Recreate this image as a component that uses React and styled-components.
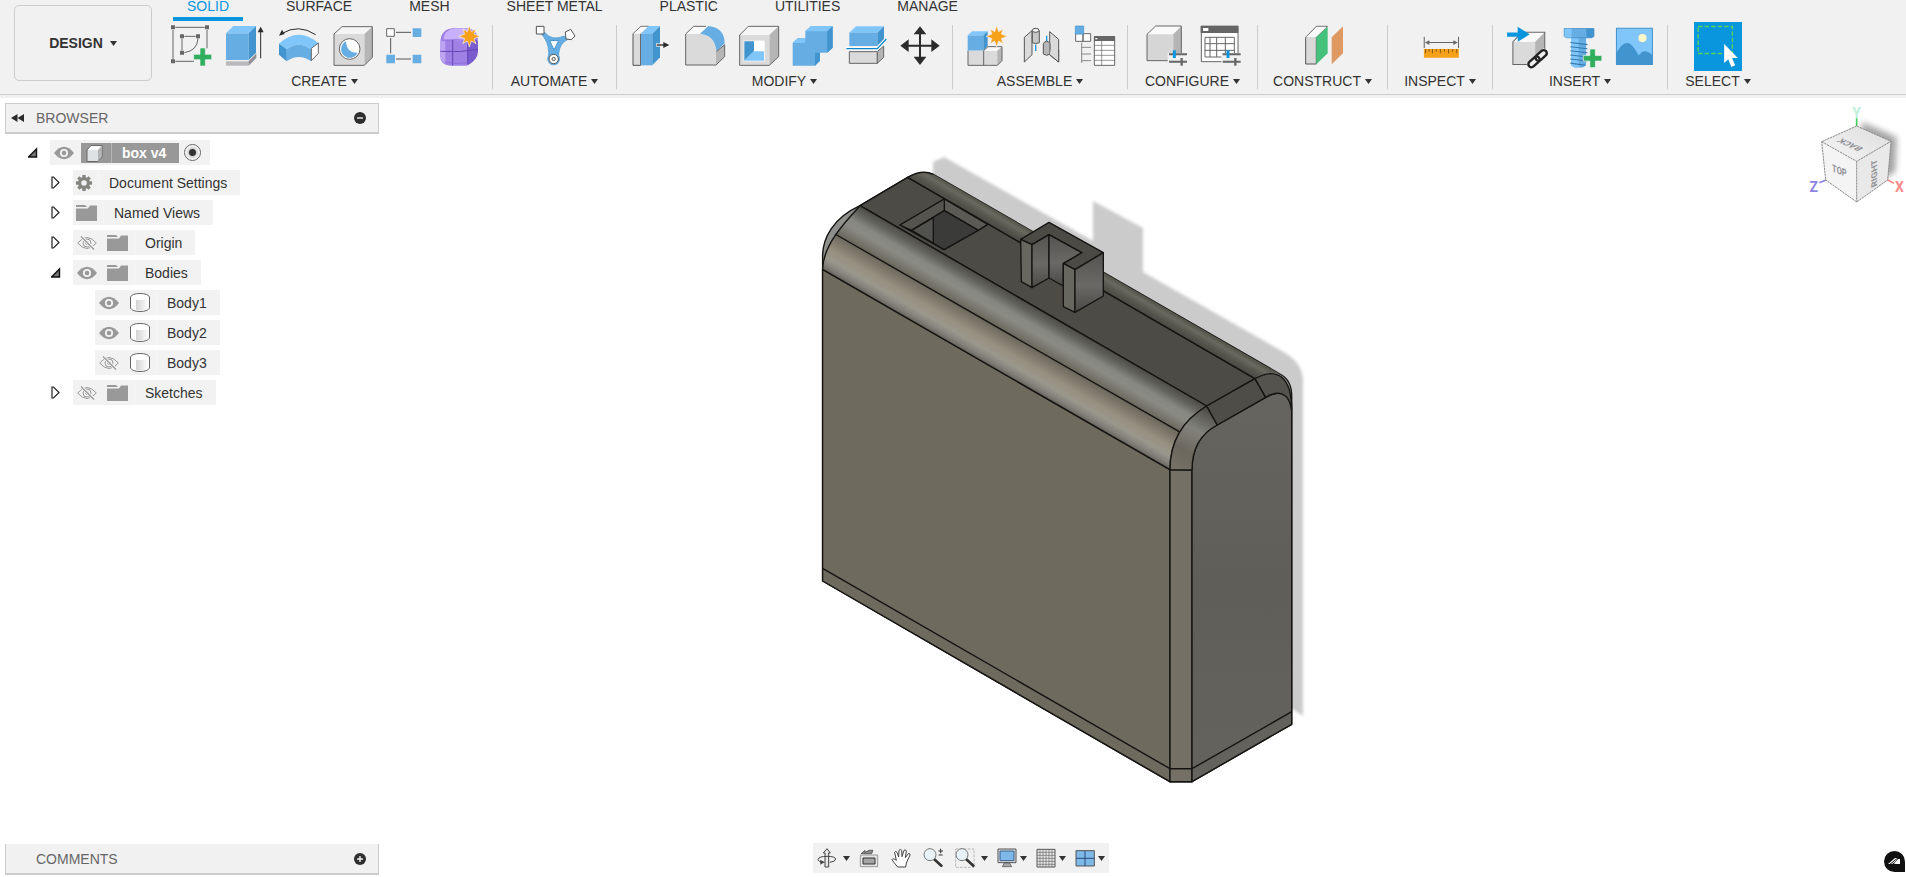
import { Fragment, useState } from "react";
import styled, { createGlobalStyle, css } from "styled-components";

const GlobalStyle = createGlobalStyle`
  * {
    box-sizing: border-box;
  }

  html, body, #root {
    height: 100%;
    margin: 0;
  }

  body {
    background: #fff;
    color: #333;
    font-family: "Liberation Sans", Arial, sans-serif;
    font-size: 14px;
    overflow: hidden;
  }

  button {
    margin: 0;
    padding: 0;
    border: 0;
    background: none;
    color: inherit;
    font: inherit;
    cursor: pointer;
  }

  svg {
    display: block;
  }
`;

const Page = styled.div`
  display: flex;
  flex-direction: column;
  height: 100%;
`;

/* ---------- toolbar ---------- */

const Toolbar = styled.header`
  display: flex;
  flex: none;
  height: 98px;
  background: #f1f1f1;
  /* thin rule that sits above the lower lip of the bar */
  background-image: linear-gradient(#ccc, #ccc);
  background-size: 100% 1px;
  background-position: 0 94px;
  background-repeat: no-repeat;
`;

const Workspace = styled.button`
  display: flex;
  flex: none;
  align-items: center;
  justify-content: center;
  gap: 7px;
  width: 138px;
  height: 76px;
  margin: 5px 5px 0 14px;
  border: 1px solid #ccc;
  border-radius: 5px;
  font-weight: bold;
`;

const Ribbon = styled.div`
  flex: 1;
  min-width: 0;
`;

const Tabs = styled.nav`
  display: flex;
  gap: 29px;
  height: 22px;
  padding-left: 16px;
`;

const Tab = styled.button`
  height: 21px;
  padding: 0 14px 5px;
  border-bottom: 4px solid ${(p) => (p.$active ? "#0a96de" : "transparent")};
  color: ${(p) => (p.$active ? "#0a96de" : "#333")};
  line-height: 12px;
  white-space: nowrap;
`;

const Groups = styled.div`
  display: flex;
`;

const Divider = styled.span`
  flex: none;
  width: 1px;
  height: 64px;
  margin-top: 3px;
  background: #ccc;
`;

const Group = styled.section`
  display: flex;
  flex: none;
  flex-direction: column;
  align-items: center;
  min-width: ${(p) => p.$min || 0}px;
`;

const Tools = styled.div`
  display: flex;
  gap: 6px;
  ${(p) =>
    p.$wide &&
    css`
      align-self: flex-start;
      padding: 0 5px 0 12px;
    `}
`;

const Tool = styled.button`
  width: 48px;
  height: 49px;
  background: ${(p) => (p.$active ? "#0a96de" : "none")};

  & svg {
    width: 48px;
    height: 49px;
  }
`;

const GroupMenu = styled.button`
  display: flex;
  align-items: center;
  gap: 4px;
  line-height: 20px;
  white-space: nowrap;
`;

const Caret = () => (
  <svg width="7" height="5" viewBox="0 0 7 5">
    <path d="M0 0h7L3.500 5z" fill="#333" />
  </svg>
);

/* ---------- toolbar drawings ---------- */

const light = "#80c6fb";
const blue = "#65ade3";
const deep = "#4194cd";

const Burst = ({ x, y }) => (
  <path
    transform={`translate(${x} ${y})`}
    d="M0-32 6-14 20-22 14-7 32 0 14 7 20 22 6 14 0 32-6 14-20 22-14 7-32 0-14-7-20-22-6-14Z"
    fill="#f7a11a"
    stroke="#f1f1f1"
    strokeWidth="2"
  />
);

const Plus = ({ x, y }) => (
  <path
    transform={`translate(${x} ${y})`}
    d="M-8-27H8V-8H27V8H8V27H-8V8H-27V-8H-8Z"
    fill="#2fae5b"
    stroke="#f1f1f1"
    strokeWidth="2"
  />
);

const Sliders = ({ x, y }) => (
  <g transform={`translate(${x} ${y})`}>
    <path d="M-20-4H34V34H-20Z" fill="#f1f1f1" />
    <path d="M-16 0H38M-16 22H38" stroke="#666" strokeWidth="6" />
    <path d="M22 11V34" stroke="#666" strokeWidth="7" />
    <path d="M0-12V11" stroke="#0a96de" strokeWidth="9" />
  </g>
);

const SketchIcon = () => (
  <svg viewBox="507 66 144 147">
    <g fill="none" stroke="#666" strokeWidth="3">
      <path d="M526 82H614M519 90V177M621 90V145M526 184H582M553 109H587M546 116V151M594 115Q592 152 553 158" />
    </g>
    <path
      d="M513 76h12v12h-12zM615 76h12v12h-12zM513 178h12v12h-12zM540 103h12v12h-12zM588 103h12v12h-12zM540 152h12v12h-12z"
      fill="#666"
    />
    <Plus x={608} y={171} />
  </svg>
);

const ExtrudeIcon = () => (
  <svg viewBox="669 66 144 147">
    <path d="M678 184H746V197H678Z" fill="#b9b9bd" />
    <path d="M746 184 769 160V174L746 197Z" fill="#909094" />
    <path d="M678 100 700 78H768L746 100Z" fill={light} />
    <path d="M678 100H746V180H678Z" fill={blue} />
    <path d="M746 100 768 78V158L746 180Z" fill={deep} />
    <path d="M782 175V90" stroke="#2b2b2b" strokeWidth="3" />
    <path d="M773 97 782 80 791 97Z" fill="#2b2b2b" />
  </svg>
);

const RevolveIcon = () => (
  <svg viewBox="831 66 144 147">
    <path d="M837 131Q896 78 957 131L934 148Q896 120 860 148Z" fill={light} />
    <path d="M860 148Q896 120 934 148V184Q896 158 860 184Z" fill={blue} />
    <path d="M837 131 860 148V184L837 164Z" fill={deep} />
    <path d="M934 145 955 129V160L934 182Z" fill="#fff" stroke="#666" strokeWidth="3" />
    <path d="M845 101Q895 70 947 104" fill="none" stroke="#2b2b2b" strokeWidth="3" />
    <path d="M837 107 846 89 854 102Z" fill="#2b2b2b" />
  </svg>
);

const HoleIcon = () => (
  <svg viewBox="993 66 144 147">
    <path d="M1002 102 1026 80H1117L1093 102Z" fill="#f5f5f5" />
    <path d="M1093 102 1117 80V172L1093 196Z" fill="#b5b5b5" />
    <path d="M1002 102H1093V196H1002Z" fill="#dadada" />
    <path d="M1002 196V102L1026 80H1117V172L1093 196Z" fill="none" stroke="#666" strokeWidth="3" />
    <circle cx="1049" cy="147" r="31" fill="#fff" stroke="#666" strokeWidth="3" />
    <path d="M1038 124A26 26 0 1 0 1073 158Q1040 160 1038 124Z" fill={blue} />
  </svg>
);

const PatternIcon = () => (
  <svg viewBox="1155 66 144 147">
    <path d="M1188 97H1233M1188 177H1233M1172 114V160" stroke="#555" strokeWidth="3" />
    <path d="M1160 86h23v23h-23z" fill="#fff" stroke="#666" strokeWidth="3" />
    <path d="M1238 85h26v26h-26zM1238 164h26v26h-26zM1159 164h26v26h-26z" fill={blue} />
  </svg>
);

const FormIcon = () => (
  <svg viewBox="1317 66 144 147">
    <path d="M1321 128Q1321 84 1366 84H1396Q1434 86 1434 124V150L1402 197H1350Q1321 194 1321 170Z" fill="#9f80e4" />
    <path d="M1330 118Q1334 88 1366 85H1398Q1420 88 1408 118Q1396 124 1330 118Z" fill="#c9b0fa" />
    <path d="M1404 122Q1434 112 1434 130V156Q1432 180 1404 196Z" fill="#7a5ccc" />
    <path d="M1321 128Q1326 118 1336 121V190Q1321 184 1321 168Z" fill="#bda4f3" />
    <path
      d="M1321 154Q1380 158 1434 148M1358 120V196M1403 120V192"
      fill="none"
      stroke="#6444b6"
      strokeWidth="3"
    />
    <path d="M1328 122Q1380 114 1404 124M1334 186Q1370 194 1402 188" fill="none" stroke="#8766d6" strokeWidth="2" />
    <Burst x={1408} y={109} />
  </svg>
);

const AutomateIcon = () => (
  <svg viewBox="121 66 144 147">
    <path
      d="M150 100 163 98Q185 124 220 108L232 118Q206 130 204 162L204 178H174V158Q174 124 150 100Z"
      fill={blue}
      stroke={deep}
      strokeWidth="2"
    />
    <path d="M177 122H204L190 150Z" fill="#fff" stroke={deep} strokeWidth="3" />
    <path d="M137 79H160V102H137Z" fill="#fff" stroke="#555" strokeWidth="3" />
    <path d="M224 96 240 88 253 108 242 119 226 117Z" fill="#fff" stroke="#555" strokeWidth="3" />
    <circle cx="189" cy="177" r="19" fill={blue} />
    <circle cx="189" cy="177" r="14" fill="#fff" stroke="#555" strokeWidth="3" />
    <circle cx="189" cy="177" r="5" fill="#fff" stroke="#555" strokeWidth="3" />
  </svg>
);

const PressPullIcon = () => (
  <svg viewBox="417 66 144 147">
    <path d="M429 196V101L453 79H476L452 101V196Z" fill="#dadada" stroke="#555" strokeWidth="3" />
    <path d="M430 101 453 80H476L452 101Z" fill="#fafafa" />
    <path d="M453 101 476 78H510L487 101Z" fill={light} />
    <path d="M453 101H487V196H453Z" fill={blue} />
    <path d="M487 101 510 78V172L487 196Z" fill={deep} />
    <path d="M498 135H520" stroke="#f1f1f1" strokeWidth="10" />
    <path d="M500 135H524" stroke="#2b2b2b" strokeWidth="4" />
    <path d="M520 126 538 135 520 144Z" fill="#2b2b2b" />
  </svg>
);

const FilletIcon = () => (
  <svg viewBox="579 66 144 147">
    <path d="M587 102 611 79H652L630 102Z" fill="#fafafa" />
    <path d="M587 102H630Q676 108 678 152V196H587Z" fill="#dadada" />
    <path d="M678 152 704 134V170L678 196Z" fill="#b5b5b5" />
    <path d="M648 79H611L587 102V195H678L704 170V134L680 154" fill="none" stroke="#666" strokeWidth="3" />
    <path d="M630 101 655 78Q704 84 704 130L679 154Q676 106 630 101Z" fill={blue} />
  </svg>
);

const ShellIcon = () => (
  <svg viewBox="741 66 144 147">
    <path d="M749 105 775 79H866L838 105Z" fill="#f5f5f5" />
    <path d="M838 105 866 79V170L838 196Z" fill="#b5b5b5" />
    <path d="M749 105H838V196H749Z" fill="#dadada" />
    <path d="M749 196V105L775 79H866V170L838 196Z" fill="none" stroke="#666" strokeWidth="3" />
    <path d="M761 122H824V184H761Z" fill="#fff" />
    <path d="M763 124H792V154L763 182Z" fill={deep} />
    <path d="M763 182 792 154H822V182Z" fill={light} />
  </svg>
);

const CombineIcon = () => (
  <svg viewBox="903 66 144 147">
    <path d="M908 129 923 115H946V94L962 79H1028V143L1012 158H990V182L975 197H908Z" fill={blue} />
    <path d="M946 94 962 79H1028L1012 94ZM908 129 923 115H946V129Z" fill={light} />
    <path d="M1012 94 1028 79V143L1012 158ZM975 158H990V182L975 197Z" fill={deep} />
  </svg>
);

const SplitIcon = () => (
  <svg viewBox="1065 66 144 147">
    <path d="M1078 98 1098 79H1182L1162 98Z" fill={light} />
    <path d="M1078 98H1162V138H1078Z" fill={blue} />
    <path d="M1162 98 1182 79V118L1162 138Z" fill={deep} />
    <path d="M1078 155H1162V190H1078Z" fill="#dadada" stroke="#666" strokeWidth="3" />
    <path d="M1162 155 1181 138V172L1162 190Z" fill="#b5b5b5" stroke="#666" strokeWidth="3" />
    <path d="M1069 146H1162L1189 117" fill="none" stroke="#fff" strokeWidth="10" />
    <path d="M1069 146H1162L1189 117" fill="none" stroke="#0a86cc" strokeWidth="4" />
  </svg>
);

const MoveIcon = () => (
  <svg viewBox="1227 66 144 147">
    <path d="M1290 95V180M1248 137H1332" stroke="#2b2b2b" strokeWidth="6" />
    <path
      d="M1271 103 1290 79 1309 103ZM1271 170 1290 195 1309 170ZM1256 118 1231 137 1256 156ZM1324 118 1349 137 1324 156Z"
      fill="#2b2b2b"
    />
  </svg>
);

const ComponentIcon = () => (
  <svg viewBox="45 66 144 147">
    <path d="M53 106 66 94H113L100 106Z" fill={light} />
    <path d="M53 106H100V152H53Z" fill={blue} />
    <path d="M100 106 113 94V138L100 152Z" fill={deep} />
    <path d="M54 152H140L156 140V182L142 196H54Z" fill="#dadada" />
    <path d="M101 152 114 140H156L142 152Z" fill="#fafafa" />
    <path d="M142 152 156 140V182L142 196Z" fill="#b5b5b5" />
    <path d="M54 152V196H142L156 182V140H114L101 152V196" fill="none" stroke="#666" strokeWidth="3" />
    <Burst x={140} y={109} />
  </svg>
);

const JointIcon = () => (
  <svg viewBox="207 66 144 147">
    <path d="M223 112 246 92V164L223 186Z" fill="#dadada" stroke="#555" strokeWidth="3" />
    <path d="M247 128V92Q257 78 268 92V128Q257 134 247 128Z" fill="#c8c8c8" stroke="#555" strokeWidth="3" />
    <ellipse cx="257" cy="91" rx="10" ry="6" fill="#f1f1f1" stroke="#555" strokeWidth="3" />
    <path d="M257 134V153M290 107V124" stroke="#0a96de" strokeWidth="4" />
    <path d="M299 95 326 118V186L299 165Z" fill="#dadada" stroke="#555" strokeWidth="3" />
    <path d="M280 130Q290 118 300 130V162Q290 170 280 162Z" fill="#b8b8b8" stroke="#555" strokeWidth="3" />
    <path d="M299 164 326 186V158L305 138Z" fill="#dadada" />
    <path d="M299 164 326 186V150" fill="none" stroke="#555" strokeWidth="3" />
  </svg>
);

const StructureIcon = () => (
  <svg viewBox="369 66 144 147">
    <path d="M377 101h22v23h-22zM399 101h23v23h-23z" fill="#fff" stroke="#666" strokeWidth="3" />
    <path d="M376 78h25v24h-25z" fill={blue} stroke={deep} strokeWidth="2" />
    <path d="M395 128V189M395 142H423M395 162H423M395 182H423" fill="none" stroke="#888" strokeWidth="3" />
    <path d="M433 110H494V196H433Z" fill="#fff" stroke="#666" strokeWidth="3" />
    <path d="M432 108H495V123H432Z" fill="#666" />
    <path d="M436 114H442V118H436Z" fill="#fff" />
    <path d="M433 136H494M433 151H494M433 166H494M433 181H494M455 123V196" stroke="#666" strokeWidth="2" />
  </svg>
);

const ConfigureIcon = () => (
  <svg viewBox="574 66 144 147">
    <path d="M589 103 615 78H692L668 103Z" fill="#fafafa" />
    <path d="M589 103H668V182H589Z" fill="#d6d6d6" />
    <path d="M668 103 692 78V160L668 182Z" fill="#b5b5b5" />
    <path d="M668 182H589V103L615 78H692V160" fill="none" stroke="#666" strokeWidth="3" />
    <Sliders x={671} y={163} />
  </svg>
);

const TableIcon = () => (
  <svg viewBox="736 66 144 147">
    <path d="M752 79H862V185H752Z" fill="#fff" stroke="#666" strokeWidth="3" />
    <path d="M750 77H863V99H750Z" fill="#666" />
    <path d="M757 84H773V93H757Z" fill="#fff" />
    <path d="M763 112H851V171H763ZM763 131H851M763 151H851M778 112V171M798 112V171M824 112V171" fill="none" stroke="#666" strokeWidth="3" />
    <Sliders x={832} y={163} />
  </svg>
);

const PlaneIcon = () => (
  <svg viewBox="1046 66 144 147">
    <path d="M1066 112 1098 79H1131L1098 112V192H1066Z" fill="#d9d9d9" stroke="#555" strokeWidth="3" />
    <path d="M1068 111 1099 80H1129L1097 111Z" fill="#fafafa" />
    <path d="M1098 112 1132 80V160L1098 193Z" fill="#44c27c" />
    <path d="M1144 112 1178 79V160L1144 193Z" fill="#df9a63" />
  </svg>
);

const MeasureIcon = () => (
  <svg viewBox="135 64 140 143">
    <path d="M159 107V140M259 107V140M165 124H253" stroke="#666" strokeWidth="3" />
    <path d="M161 124 174 117V131ZM257 124 244 117V131Z" fill="#666" />
    <path d="M158 143H260V168H158Z" fill="#f7a11a" />
    <path d="M163 143V155M173 143V151M183 143V155M194 143V151M206 143V155M218 143V151M230 143V155M242 143V151M254 143V155" stroke="#8a5a10" strokeWidth="3" />
  </svg>
);

const DeriveIcon = () => (
  <svg viewBox="395 64 140 143">
    <path d="M418 122 444 94H511L483 122Z" fill="#fafafa" />
    <path d="M418 122H483V188H418Z" fill="#dadada" />
    <path d="M483 122 511 94V160L483 188Z" fill="#b5b5b5" />
    <path d="M460 188H418V122L444 94H511V148" fill="none" stroke="#666" strokeWidth="3" />
    <path d="M401 95H432V78L467 100 432 122V107H401Z" fill="#0a96de" />
    {/* chain links */}
    <g fill="none">
      <g transform="translate(490 171) rotate(-42)">
        <path d="M-34-11H34V11H-34Z" fill="#f1f1f1" />
        <rect x="-33" y="-9" width="38" height="18" rx="9" stroke="#222" strokeWidth="7" />
        <rect x="-5" y="-9" width="38" height="18" rx="9" stroke="#222" strokeWidth="7" />
      </g>
    </g>
  </svg>
);

const BoltIcon = () => (
  <svg viewBox="553 64 140 143">
    <path d="M588 108H632V190L622 197H598L588 190Z" fill={blue} />
    <path d="M588 108H610V197H598L588 190Z" fill={light} />
    <path d="M586 124 636 130M586 136 636 142M586 148 636 154M586 160 636 166M586 172 636 178M586 184 630 190" stroke="#3578ac" strokeWidth="3" />
    <path d="M568 83H655V106L648 110H575L568 106Z" fill={blue} stroke="#3f86bd" strokeWidth="2" />
    <path d="M569 84H590V109H575L569 106Z" fill={light} />
    <path d="M633 84H655V106L648 110H633Z" fill={deep} />
    <Plus x={651} y={170} />
  </svg>
);

const CanvasIcon = () => (
  <svg viewBox="711 64 140 143">
    <path d="M721 82H826V188H721Z" fill={light} stroke={deep} strokeWidth="3" />
    <circle cx="797" cy="111" r="12" fill="#fdf6c8" />
    <path d="M722 152Q750 104 774 142L786 162Q802 138 825 160V187H722Z" fill={deep} />
  </svg>
);

const SelectIcon = () => (
  <svg viewBox="948 66 140 143">
    <path d="M960 79H1060V158H960Z" fill="none" stroke="#5bd05b" strokeWidth="4" strokeDasharray="13 6" />
    <path d="M1036 130V186L1048 175 1057 197 1068 192 1059 171H1076Z" fill="#fff" />
  </svg>
);

const tabs = ["SOLID", "SURFACE", "MESH", "SHEET METAL", "PLASTIC", "UTILITIES", "MANAGE"];

const groups = [
  {
    name: "CREATE",
    wide: true,
    tools: [
      ["Create Sketch", SketchIcon],
      ["Extrude", ExtrudeIcon],
      ["Revolve", RevolveIcon],
      ["Hole", HoleIcon],
      ["Pattern", PatternIcon],
      ["Create Form", FormIcon],
    ],
  },
  { name: "AUTOMATE", min: 123, tools: [["Automated Modeling", AutomateIcon]] },
  {
    name: "MODIFY",
    wide: true,
    tools: [
      ["Press Pull", PressPullIcon],
      ["Fillet", FilletIcon],
      ["Shell", ShellIcon],
      ["Combine", CombineIcon],
      ["Split Body", SplitIcon],
      ["Move/Copy", MoveIcon],
    ],
  },
  {
    name: "ASSEMBLE",
    wide: true,
    min: 174,
    tools: [
      ["New Component", ComponentIcon],
      ["Joint", JointIcon],
      ["Structure", StructureIcon],
    ],
  },
  {
    name: "CONFIGURE",
    min: 129,
    tools: [
      ["Configure Model", ConfigureIcon],
      ["Configuration Table", TableIcon],
    ],
  },
  { name: "CONSTRUCT", min: 129, tools: [["Offset Plane", PlaneIcon]] },
  { name: "INSPECT", min: 104, tools: [["Measure", MeasureIcon]] },
  {
    name: "INSERT",
    wide: true,
    min: 174,
    tools: [
      ["Insert Derive", DeriveIcon],
      ["Insert Fastener", BoltIcon],
      ["Insert Canvas", CanvasIcon],
    ],
  },
  { name: "SELECT", min: 100, active: true, tools: [["Select", SelectIcon]] },
];

/* ---------- viewport ---------- */

const Viewport = styled.main`
  position: relative;
  display: grid;
  flex: 1;
  grid-template-columns: 1fr auto 1fr;
  grid-template-rows: 1fr auto;
  min-height: 0;
  padding: 2px 0 2px 5px;
`;

// The drawing lies under the floating panels and scales with the window.
const Scene = styled.svg`
  position: absolute;
  inset: 0;
  width: 100%;
  height: 100%;
`;

const Side = styled.aside`
  position: relative;
  grid-row: 1;
  grid-column: 1;
  width: 374px;
  padding-top: 3px;
`;

const PanelBar = styled.div`
  display: flex;
  align-items: center;
  width: 374px;
  height: 31px;
  padding: 0 12px 0 5px;
  border: solid #ccc;
  border-width: ${(p) => (p.$docked ? "0 1px 2px" : "1px 1px 2px")};
  background: #f1f1f1;
  color: #666;
`;

const PanelTitle = styled.h2`
  flex: 1;
  margin: 0 0 0 ${(p) => (p.$indent ? 25 : 12)}px;
  font-size: 14px;
  font-weight: normal;
`;

const Tree = styled.ul`
  display: flex;
  flex-direction: column;
  gap: 5px;
  margin: 6px 0 0;
  padding: 0;
  list-style: none;
`;

const TreeRow = styled.li`
  display: flex;
  height: 25px;
  padding-left: ${(p) => [23, 46, 68][p.$depth]}px;
`;

const Twisty = styled.button`
  width: 22px;
  height: 25px;
`;

const TwistyGap = styled.span`
  width: 22px;
`;

const Chip = styled.div`
  display: flex;
  background: #f2f2f2;
`;

const Cell = styled.span`
  display: flex;
  align-items: center;
  justify-content: center;
  width: ${(p) => (p.$narrow ? 26 : 31)}px;
  padding-right: 3px;
  border-right: 1px solid ${(p) => (p.$selected ? "#b5b5b5" : "#f6f6f6")};
`;

const EyeButton = styled.button`
  display: flex;
  align-items: center;
  width: 31px;
  padding-left: 4px;
`;

const NodeName = styled.button`
  padding: 0 13px 0 10px;
  white-space: nowrap;
`;

const Selected = styled.span`
  display: flex;
  align-self: center;
  height: 20px;
  margin-top: 1px;
  background: #989898;

  & ${NodeName} {
    color: #fff;
    font-weight: bold;
  }
`;

const Activate = styled.input`
  appearance: none;
  align-self: center;
  width: 17px;
  height: 17px;
  margin: 0 9px 0 5px;
  border: 1px solid #666;
  border-radius: 50%;
  background: radial-gradient(circle, #333 0 3px, #d0d0d0 4px, #fafafa 7px);
`;

const NavBar = styled.div`
  position: relative;
  display: flex;
  grid-row: 2;
  grid-column: 2;
  align-items: center;
  gap: 12px;
  height: 30px;
  margin: 0 0 2px 10px;
  padding: 0 4px;
  background: #f1f1f1;
`;

const NavTool = styled.button`
  display: flex;
  align-items: center;
  gap: ${(p) => (p.$loose ? 6 : 3)}px;
  margin-right: ${(p) => (p.$menu && !p.$last ? -3 : 0)}px;
`;

const Comments = styled(PanelBar)`
  position: relative;
  grid-row: 2;
  grid-column: 1;
  align-self: end;
`;

const CubeSlot = styled.div`
  position: relative;
  grid-row: 1;
  grid-column: 3;
  justify-self: end;
`;

const LogButton = styled.button`
  position: relative;
  grid-row: 2;
  grid-column: 3;
  align-self: end;
  justify-self: end;
  margin: 0 1px 3px 0;
`;

const EyeIcon = ({ off }) => (
  <svg width="20" height="14" viewBox="0 0 20 14">
    {off ? (
      <g fill="none" stroke="#999">
        <path d="M.7 7Q10-4 19.300 7 10 18 .7 7Z" />
        <circle cx="10" cy="7" r="4" />
        <circle cx="10" cy="7" r="1.500" />
        <path d="M4 .5 17 13.500" stroke="#f2f2f2" strokeWidth="3" />
        <path d="M4 .5 17 13.500" strokeWidth="1.200" />
      </g>
    ) : (
      <>
        <path d="M0 7Q10-5.500 20 7 10 19.500 0 7Z" fill="#999" />
        <circle cx="10" cy="7" r="3.200" fill="#999" stroke="#f2f2f2" strokeWidth="1.800" />
      </>
    )}
  </svg>
);

const FolderIcon = () => (
  <svg width="21" height="17" viewBox="0 0 21 17">
    <path d="M0 1h9l2 2H0zM0 4.500h12l2-3h7V17H0z" fill="#999" />
  </svg>
);

const GearIcon = () => (
  <svg width="16" height="16" viewBox="-8 -8 16 16">
    {[0, 45, 90, 135].map((a) => (
      <path key={a} d="M0-8V-3.500M0 8V3.500" stroke="#858580" strokeWidth="3.400" transform={`rotate(${a})`} />
    ))}
    <circle r="4.400" fill="none" stroke="#858580" strokeWidth="3.200" />
  </svg>
);

const BodyIcon = () => (
  <svg width="20" height="19" viewBox="0 0 20 19">
    <defs>
      <linearGradient id="cyl">
        <stop offset="0" stopColor="#fff" />
        <stop offset=".25" stopColor="#fff" />
        <stop offset=".3" stopColor="#d5d5d5" />
        <stop offset="1" stopColor="#fff" />
      </linearGradient>
    </defs>
    <path d="M.5 4v11q2 3.500 9.500 3.500T19.500 15V4Q18 .5 10 .5T.5 4Z" fill="#fff" stroke="#666" />
    <path d="M1 6q9 2 18 0v9q-9 5-18 0z" fill="url(#cyl)" />
  </svg>
);

const BoxIcon = () => (
  <svg width="17" height="17" viewBox="0 0 17 17">
    <path d="M1 5 5 .5H16V12l-4 4.500H1Z" fill="#dfe2e4" stroke="#666" />
    <path d="M1.500 5 5.500 1H15.500L12 5Z" fill="#fff" />
    <path d="M12 5 15.500 1V12L12 16Z" fill="#b4b4b4" />
  </svg>
);

const TwistyIcon = ({ open }) => (
  <svg width="10" height="13" viewBox="0 0 10 13">
    {open ? (
      <path d="M.5 11H8.500V3Z" fill="#777" stroke="#111" strokeWidth="1.400" />
    ) : (
      <path d="M1 1V12H2.500L8 6.500 2.500 1Z" fill="#fff" stroke="#222" strokeWidth="1.200" />
    )}
  </svg>
);

const RoundIcon = ({ plus }) => (
  <svg width="12" height="12" viewBox="0 0 12 12">
    <circle cx="6" cy="6" r="6" fill="#2e2e2e" />
    <path d={plus ? "M3 6H9M6 3V9" : "M3 6H9"} stroke="#f1f1f1" strokeWidth="1.400" />
  </svg>
);

const nodes = [
  { name: "Document Settings", depth: 1, open: false, icon: "gear" },
  { name: "Named Views", depth: 1, open: false, icon: "folder" },
  { name: "Origin", depth: 1, open: false, icon: "folder", eye: "off" },
  { name: "Bodies", depth: 1, open: true, icon: "folder", eye: "on" },
  { name: "Body1", depth: 2, icon: "body", eye: "on" },
  { name: "Body2", depth: 2, icon: "body", eye: "on" },
  { name: "Body3", depth: 2, icon: "body", eye: "off" },
  { name: "Sketches", depth: 1, open: false, icon: "folder", eye: "off" },
];

const nodeIcons = { gear: GearIcon, folder: FolderIcon, body: BodyIcon };

const TreeNode = ({ node }) => {
  const Icon = nodeIcons[node.icon];
  return (
    <TreeRow $depth={node.depth}>
      {node.depth === 1 ? (
        <Twisty aria-label={`Toggle ${node.name}`}>
          <TwistyIcon open={node.open} />
        </Twisty>
      ) : (
        <TwistyGap />
      )}
      <Chip>
        {node.eye && (
          <EyeButton aria-label={`Show ${node.name}`}>
            <EyeIcon off={node.eye === "off"} />
          </EyeButton>
        )}
        <Cell $narrow={node.icon === "gear"}>
          <Icon />
        </Cell>
        <NodeName>{node.name}</NodeName>
      </Chip>
    </TreeRow>
  );
};

/* ---------- navigation bar drawings ---------- */

const OrbitIcon = () => (
  <svg width="20" height="20" viewBox="50 53 60 60">
    <path d="M80 55 90 68H85V110H74V68H69Z" fill="#e6e6e6" stroke="#444" strokeWidth="3" />
    <path d="M72 96Q52 94 53 87 56 78 80 78 104 78 106 86 106 94 88 96" fill="none" stroke="#444" strokeWidth="3" />
    <path d="M60 88 72 96 60 103Z" fill="#444" />
  </svg>
);

const LookIcon = () => (
  <svg width="20" height="20" viewBox="172 53 60 60">
    <path d="M176 74H228V109H176Z" fill="#e4e4e4" stroke="#999" strokeWidth="3" />
    <path d="M184 83H220V101H184Z" fill="#a5a5a5" stroke="#333" strokeWidth="3" />
    <path d="M178 70 190 60V66Q204 56 214 60L210 70Z" fill="#888" stroke="#444" strokeWidth="2" />
  </svg>
);

const HandIcon = () => (
  <svg width="20" height="20" viewBox="270 53 60 60">
    <path
      d="M290 110Q278 96 273 88 276 82 286 90L281 66Q284 60 288 66L293 80 294 60Q298 54 302 60L303 79 309 60Q314 56 316 62L313 82 322 70Q328 68 327 74L316 98 314 110Z"
      fill="#fff"
      stroke="#444"
      strokeWidth="3"
    />
  </svg>
);

const ZoomIcon = ({ region }) => (
  <svg width="20" height="20" viewBox="367 53 60 60">
    {region && <path d="M369 56H424V111H369Z" fill="none" stroke="#999" strokeWidth="2" strokeDasharray="8 4" />}
    <path d="M400 86 422 106" stroke="#333" strokeWidth="8" strokeLinecap="round" />
    <circle cx="388" cy="73" r="18" fill="#e9f3f7" stroke="#777" strokeWidth="3" />
    {!region && <path d="M413 62H427M420 55V69M414 74H426" stroke="#333" strokeWidth="3" />}
  </svg>
);

const DisplayIcon = () => (
  <svg width="20" height="20" viewBox="589 53 60 60">
    <path d="M592 56H646V97H592Z" fill="#ddd" stroke="#555" strokeWidth="3" />
    <path d="M598 62H640V91H598Z" fill="#7db8e8" stroke="#3a5f8a" strokeWidth="3" />
    <path d="M611 98H627L633 109H605Z" fill="#aaa" stroke="#444" strokeWidth="2" />
  </svg>
);

const GridIcon = () => (
  <svg width="20" height="20" viewBox="704 53 60 60">
    <path d="M707 57H761V110H707Z" fill="#e8e8e8" stroke="#555" strokeWidth="3" />
    <path
      d="M716 57V110M725 57V110M734 57V110M743 57V110M752 57V110M707 66H761M707 75H761M707 84H761M707 93H761M707 102H761"
      stroke="#666"
      strokeWidth="2"
    />
  </svg>
);

const ViewsIcon = () => (
  <svg width="20" height="20" viewBox="820 53 60 60">
    <path d="M823 61H878V107H823Z" fill="#7db8e8" stroke="#555" strokeWidth="3" />
    <path d="M850 61V107M823 84H878" stroke="#2c4a78" strokeWidth="3" />
  </svg>
);

const navTools = [
  { name: "Orbit", Icon: OrbitIcon, menu: true, loose: true },
  { name: "Look At", Icon: LookIcon },
  { name: "Pan", Icon: HandIcon },
  { name: "Zoom", Icon: ZoomIcon },
  { name: "Zoom Window", Icon: () => <ZoomIcon region />, menu: true, loose: true },
  { name: "Display Settings", Icon: DisplayIcon, menu: true },
  { name: "Grid and Snaps", Icon: GridIcon, menu: true },
  { name: "Viewports", Icon: ViewsIcon, menu: true, last: true },
];

const ViewCube = () => (
  <svg width="126" height="110" viewBox="0 0 378 330" fontFamily="Roboto, sans-serif" fontWeight="bold">
    <defs>
      <filter id="cubeBlur" x="-30%" y="-30%" width="160%" height="160%">
        <feGaussianBlur stdDeviation="10" />
      </filter>
      <linearGradient id="cubeTop" x1="0" y1="1" x2="1" y2="0">
        <stop offset="0" stopColor="#f6f6f6" />
        <stop offset="1" stopColor="#dcdcdc" />
      </linearGradient>
    </defs>
    <path d="M246 66 350 112 346 216 300 240 240 180Z" fill="#000" opacity=".36" filter="url(#cubeBlur)" />
    <path d="M230 55V78" stroke="#3fd05c" strokeWidth="5" />
    <path d="M118 248 138 240" stroke="#8d83e2" strokeWidth="5" />
    <path d="M322 239 342 250" stroke="#fb8c8c" strokeWidth="5" />
    <path d="M125 125 230 78 333 124 230 184Z" fill="url(#cubeTop)" />
    <path d="M125 125 230 184V306L137 240Z" fill="#f4f4f4" />
    <path d="M230 184 333 124 323 240 230 306Z" fill="#e9e9e9" />
    <path
      d="M125 125 230 78 333 124 323 240 230 306 137 240ZM125 125 230 184 333 124M230 184V306"
      fill="none"
      stroke="#8a8a8a"
      strokeWidth="3"
      strokeDasharray="7 2"
    />
    <g fill="#8f8f94" textAnchor="middle">
      <text transform="matrix(.86 .34 0 1.2 178 223)" fontSize="26">TOP</text>
      <text transform="matrix(0 -1 .86 -.4 292 216)" fontSize="28">RIGHT</text>
      <text transform="matrix(-.9 -.4 .9 -.45 219 130)" fontSize="28">BACK</text>
    </g>
    <g fontSize="42" textAnchor="middle">
      <text x="230" y="53" fill="#bdf0dc">Y</text>
      <text x="101" y="275" fill="#8d83e2">Z</text>
      <text x="358" y="275" fill="#fb8c8c">X</text>
    </g>
  </svg>
);

/* ---------- the part ---------- */

const Part = () => (
  <Scene viewBox="0 98 1906 779" preserveAspectRatio="xMidYMid meet">
    <defs>
      <filter id="soft" x="-10%" y="-10%" width="120%" height="120%">
        <feGaussianBlur stdDeviation="1.500" />
      </filter>
      <linearGradient id="round" gradientUnits="userSpaceOnUse" x1="960" y1="263.400" x2="923.100" y2="327.300">
        <stop offset="0" stopColor="#4c4b45" />
        <stop offset=".1" stopColor="#62625c" />
        <stop offset=".22" stopColor="#868781" />
        <stop offset=".31" stopColor="#8b8b85" />
        <stop offset=".4" stopColor="#7b7a72" />
        <stop offset=".49" stopColor="#6b675c" />
        <stop offset=".6" stopColor="#7f7a6c" />
        <stop offset=".72" stopColor="#969080" />
        <stop offset=".84" stopColor="#9a978c" />
        <stop offset=".93" stopColor="#82817b" />
        <stop offset="1" stopColor="#67645b" />
      </linearGradient>
      <linearGradient id="backRound" gradientUnits="userSpaceOnUse" x1="1000" y1="212.800" x2="992.300" y2="226.100">
        <stop offset="0" stopColor="#55544b" />
        <stop offset=".3" stopColor="#6a695f" />
        <stop offset=".7" stopColor="#54534c" />
        <stop offset="1" stopColor="#4b4a44" />
      </linearGradient>
      <linearGradient id="corner" gradientUnits="userSpaceOnUse" x1="1212" y1="412" x2="1180" y2="470">
        <stop offset="0" stopColor="#4e4d47" />
        <stop offset=".35" stopColor="#82827c" />
        <stop offset=".7" stopColor="#6d685e" />
        <stop offset="1" stopColor="#757065" />
      </linearGradient>
      <linearGradient id="wall" x1="0" y1="0" x2="0" y2="1">
        <stop offset="0" stopColor="#54534f" />
        <stop offset=".55" stopColor="#6a6965" />
        <stop offset="1" stopColor="#4a4945" />
      </linearGradient>
      <linearGradient id="side" x1="0" y1="0" x2="0" y2="1">
        <stop offset="0" stopColor="#65645f" />
        <stop offset=".5" stopColor="#5f5e59" />
        <stop offset="1" stopColor="#64635e" />
      </linearGradient>
    </defs>

    <path
      d="M933 162 944 157 1093 241V201L1143 228V272L1287 354Q1302 364 1303 380V716L1291 708 1000 420 933 190Z"
      fill="#cbcbcb"
      filter="url(#soft)"
    />

    <g stroke="#151412" strokeWidth="1.400" strokeLinejoin="round">
      <path
        d="M822.600 581V255C823 238 833 218 860 205.700L907.700 177.300Q922 170 933.300 174.300L1280 374Q1291.700 380 1291.700 396V724.300L1192 781.700H1169.700Z"
        fill="#8f8f8b"
      />
      <path d="M822.600 269.300 1170 469.700V781.700L822.600 581Z" fill="#6f6a5e" />
      <path d="M1170 469.700H1192V781.700H1170Z" fill="#757065" />
      <path d="M1192 470Q1192 438 1217.300 425L1265.700 397.300Q1291.700 384 1291.700 412V724.300L1192 781.700Z" fill="url(#side)" />
      <path d="M860 205.700 907.700 177.300 1255 378.700 1206.700 406Z" fill="#4d4b46" />
      <path d="M907.700 177.300Q922 169 933.300 174.300L1280 374Q1268 370 1255 378.700Z" fill="url(#backRound)" stroke="none" />
      <path d="M907.700 177.300Q922 169 933.300 174.300M907.700 177.300 1255 378.700" fill="none" />
      <path d="M822.600 269.300C823 246 843 224 860 205.700L1206.700 406Q1170 428 1170 469.700Z" fill="url(#round)" />
      <path d="M835 234 1181 432.700" fill="none" />
      <path d="M1170 469.700Q1170 428 1206.700 406L1217.300 425Q1192 438 1192 470Z" fill="url(#corner)" />
      <path d="M1206.700 406 1255 378.700 1265.700 397.300 1217.300 425Z" fill="#4e4d47" />
      <path
        d="M1255 378.700C1278 366 1291.700 378 1291.700 410 1289 392 1278 390 1265.700 397.300Z"
        fill="#55534e"
      />
      <path d="M822.600 568.300 1170 768.700H1192L1291.700 711.700" fill="none" />
    </g>

    {/* pocket and clip, drawn at three times their size */}
    <g transform="translate(810 145) scale(.33333)" stroke="#151412" strokeWidth="4" strokeLinejoin="round">
      <path d="M403 162 533 238 402 314 270 240Z" fill="#4d4c48" />
      <path d="M403 162 533 238 505 256 403 197Z" fill="#5b5a54" />
      <path d="M403 162 270 240 305 256 403 197Z" fill="#55544e" />
      <path d="M403 197 505 256 402 314 305 256Z" fill="#3b3b39" />
      <path d="M370 218V294L305 256Z" fill="#51514e" />
      <path d="M632 283 717 232 880 323 795 374 760 355 815 323 717 269 666 299Z" fill="#4b4a45" />
      <path d="M632 283 666 299V428L634 410Z" fill="#67665f" />
      <path d="M666 299 717 269V399L666 428Z" fill="url(#wall)" />
      <path d="M717 269 815 323 760 355V423L717 399Z" fill="url(#wall)" />
      <path d="M760 355 795 374V502L760 485Z" fill="#67665f" />
      <path d="M795 374 880 323V453L795 502Z" fill="url(#wall)" />
    </g>
  </Scene>
);

export default function App() {
  const [tab, setTab] = useState("SOLID");

  return (
    <Page>
      <GlobalStyle />
      <Toolbar>
        <Workspace>
          DESIGN <Caret />
        </Workspace>
        <Ribbon>
          <Tabs>
            {tabs.map((name) => (
              <Tab key={name} $active={name === tab} onClick={() => setTab(name)}>
                {name}
              </Tab>
            ))}
          </Tabs>
          <Groups>
            {groups.map((group, i) => (
              <Fragment key={group.name}>
                {i > 0 && <Divider />}
                <Group $min={group.min}>
                  <Tools $wide={group.wide}>
                    {group.tools.map(([label, Icon]) => (
                      <Tool key={label} aria-label={label} $active={group.active}>
                        <Icon />
                      </Tool>
                    ))}
                  </Tools>
                  <GroupMenu>
                    {group.name} <Caret />
                  </GroupMenu>
                </Group>
              </Fragment>
            ))}
          </Groups>
        </Ribbon>
      </Toolbar>

      <Viewport>
        <Part />
        <Side>
          <PanelBar>
            <button aria-label="Collapse browser">
              <svg width="13" height="8" viewBox="0 0 13 8">
                <path d="M6.500 0V8L0 4ZM13 0V8L6.500 4Z" fill="#2b2b2b" />
              </svg>
            </button>
            <PanelTitle>BROWSER</PanelTitle>
            <button aria-label="Hide browser">
              <RoundIcon />
            </button>
          </PanelBar>
          <Tree>
            <TreeRow $depth={0}>
              <Twisty aria-label="Toggle box v4">
                <TwistyIcon open />
              </Twisty>
              <Chip>
                <EyeButton aria-label="Show box v4">
                  <EyeIcon />
                </EyeButton>
                <Selected>
                  <Cell $selected>
                    <BoxIcon />
                  </Cell>
                  <NodeName>box v4</NodeName>
                </Selected>
                <Activate type="radio" name="active" aria-label="Activate box v4" defaultChecked />
              </Chip>
            </TreeRow>
            {nodes.map((node) => (
              <TreeNode key={node.name} node={node} />
            ))}
          </Tree>
        </Side>

        <CubeSlot>
          <ViewCube />
        </CubeSlot>

        <Comments $docked>
          <PanelTitle $indent>COMMENTS</PanelTitle>
          <button aria-label="Show comments">
            <RoundIcon plus />
          </button>
        </Comments>

        <NavBar>
          {navTools.map(({ name, Icon, menu, loose, last }) => (
            <NavTool key={name} aria-label={name} $menu={menu} $loose={loose} $last={last}>
              <Icon />
              {menu && <Caret />}
            </NavTool>
          ))}
        </NavBar>

        <LogButton aria-label="Text commands">
          <svg width="21" height="21" viewBox="0 0 21 21">
            <path d="M10.500 0A10.500 10.500 0 0 1 21 10.500V21H10.500A10.500 10.500 0 0 1 10.500 0Z" fill="#111" />
            <path d="M4 13 11 7H14L11 11 8 13ZM10 13 14 8H16V13Z" fill="#fff" />
            <path d="M5 14 15 6" stroke="#111" />
          </svg>
        </LogButton>
      </Viewport>
    </Page>
  );
}
